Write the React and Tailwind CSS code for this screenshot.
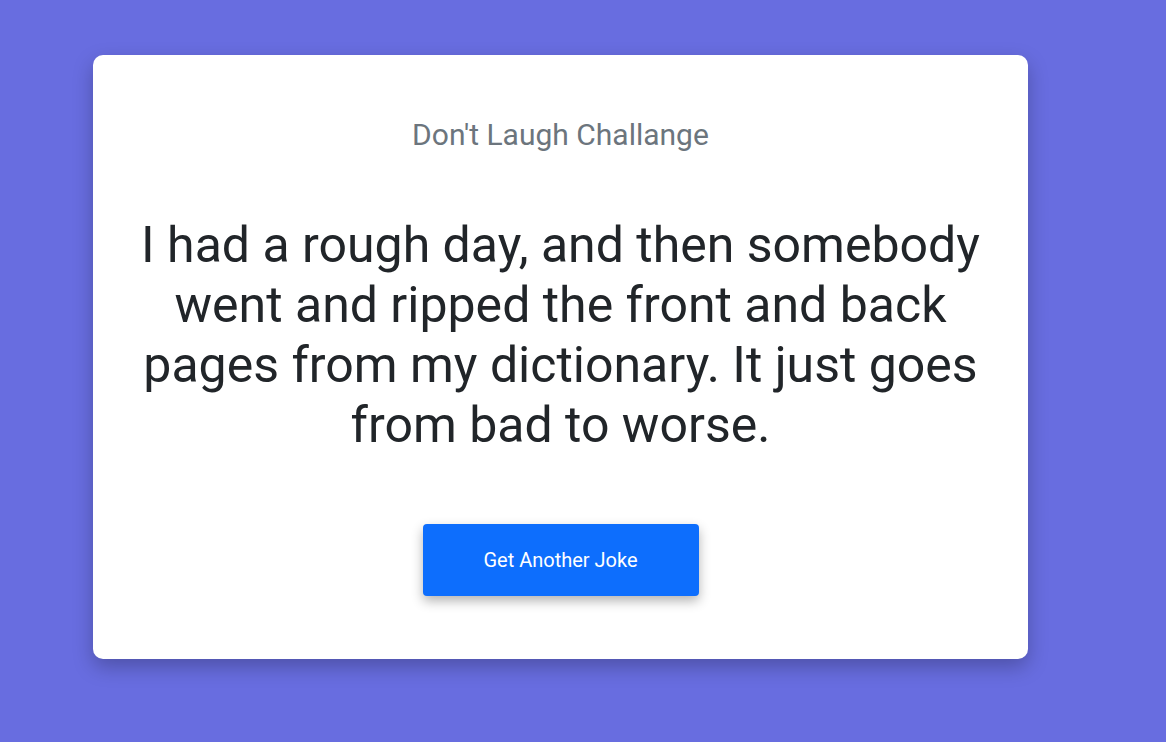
export default function App() {
  return (
    <div className="min-h-[742px] w-full bg-[#686de0] pt-[55px] pl-[93px]" style={{ fontFamily: "Roboto, 'Liberation Sans', sans-serif" }}>
      <div className="w-[935px] h-[604px] bg-white rounded-[10px] shadow-[0_8px_20px_rgba(0,0,0,0.25)] flex flex-col items-center pt-[58px] px-[40px]">
        <h3 className="text-[30px] leading-[44px] text-[#6c757d] font-normal">Don't Laugh Challange</h3>
        <p className="mt-[58px] text-[50px] leading-[60px] text-[#212529] text-center">
          I had a rough day, and then somebody went and ripped the front and back pages from my dictionary. It just goes from bad to worse.
        </p>
        <button className="mt-[69px] w-[276px] h-[72px] bg-[#0d6efd] text-white text-[20px] rounded-[4px] shadow-[0_5px_12px_rgba(0,0,0,0.3)]">
          Get Another Joke
        </button>
      </div>
    </div>
  );
}
